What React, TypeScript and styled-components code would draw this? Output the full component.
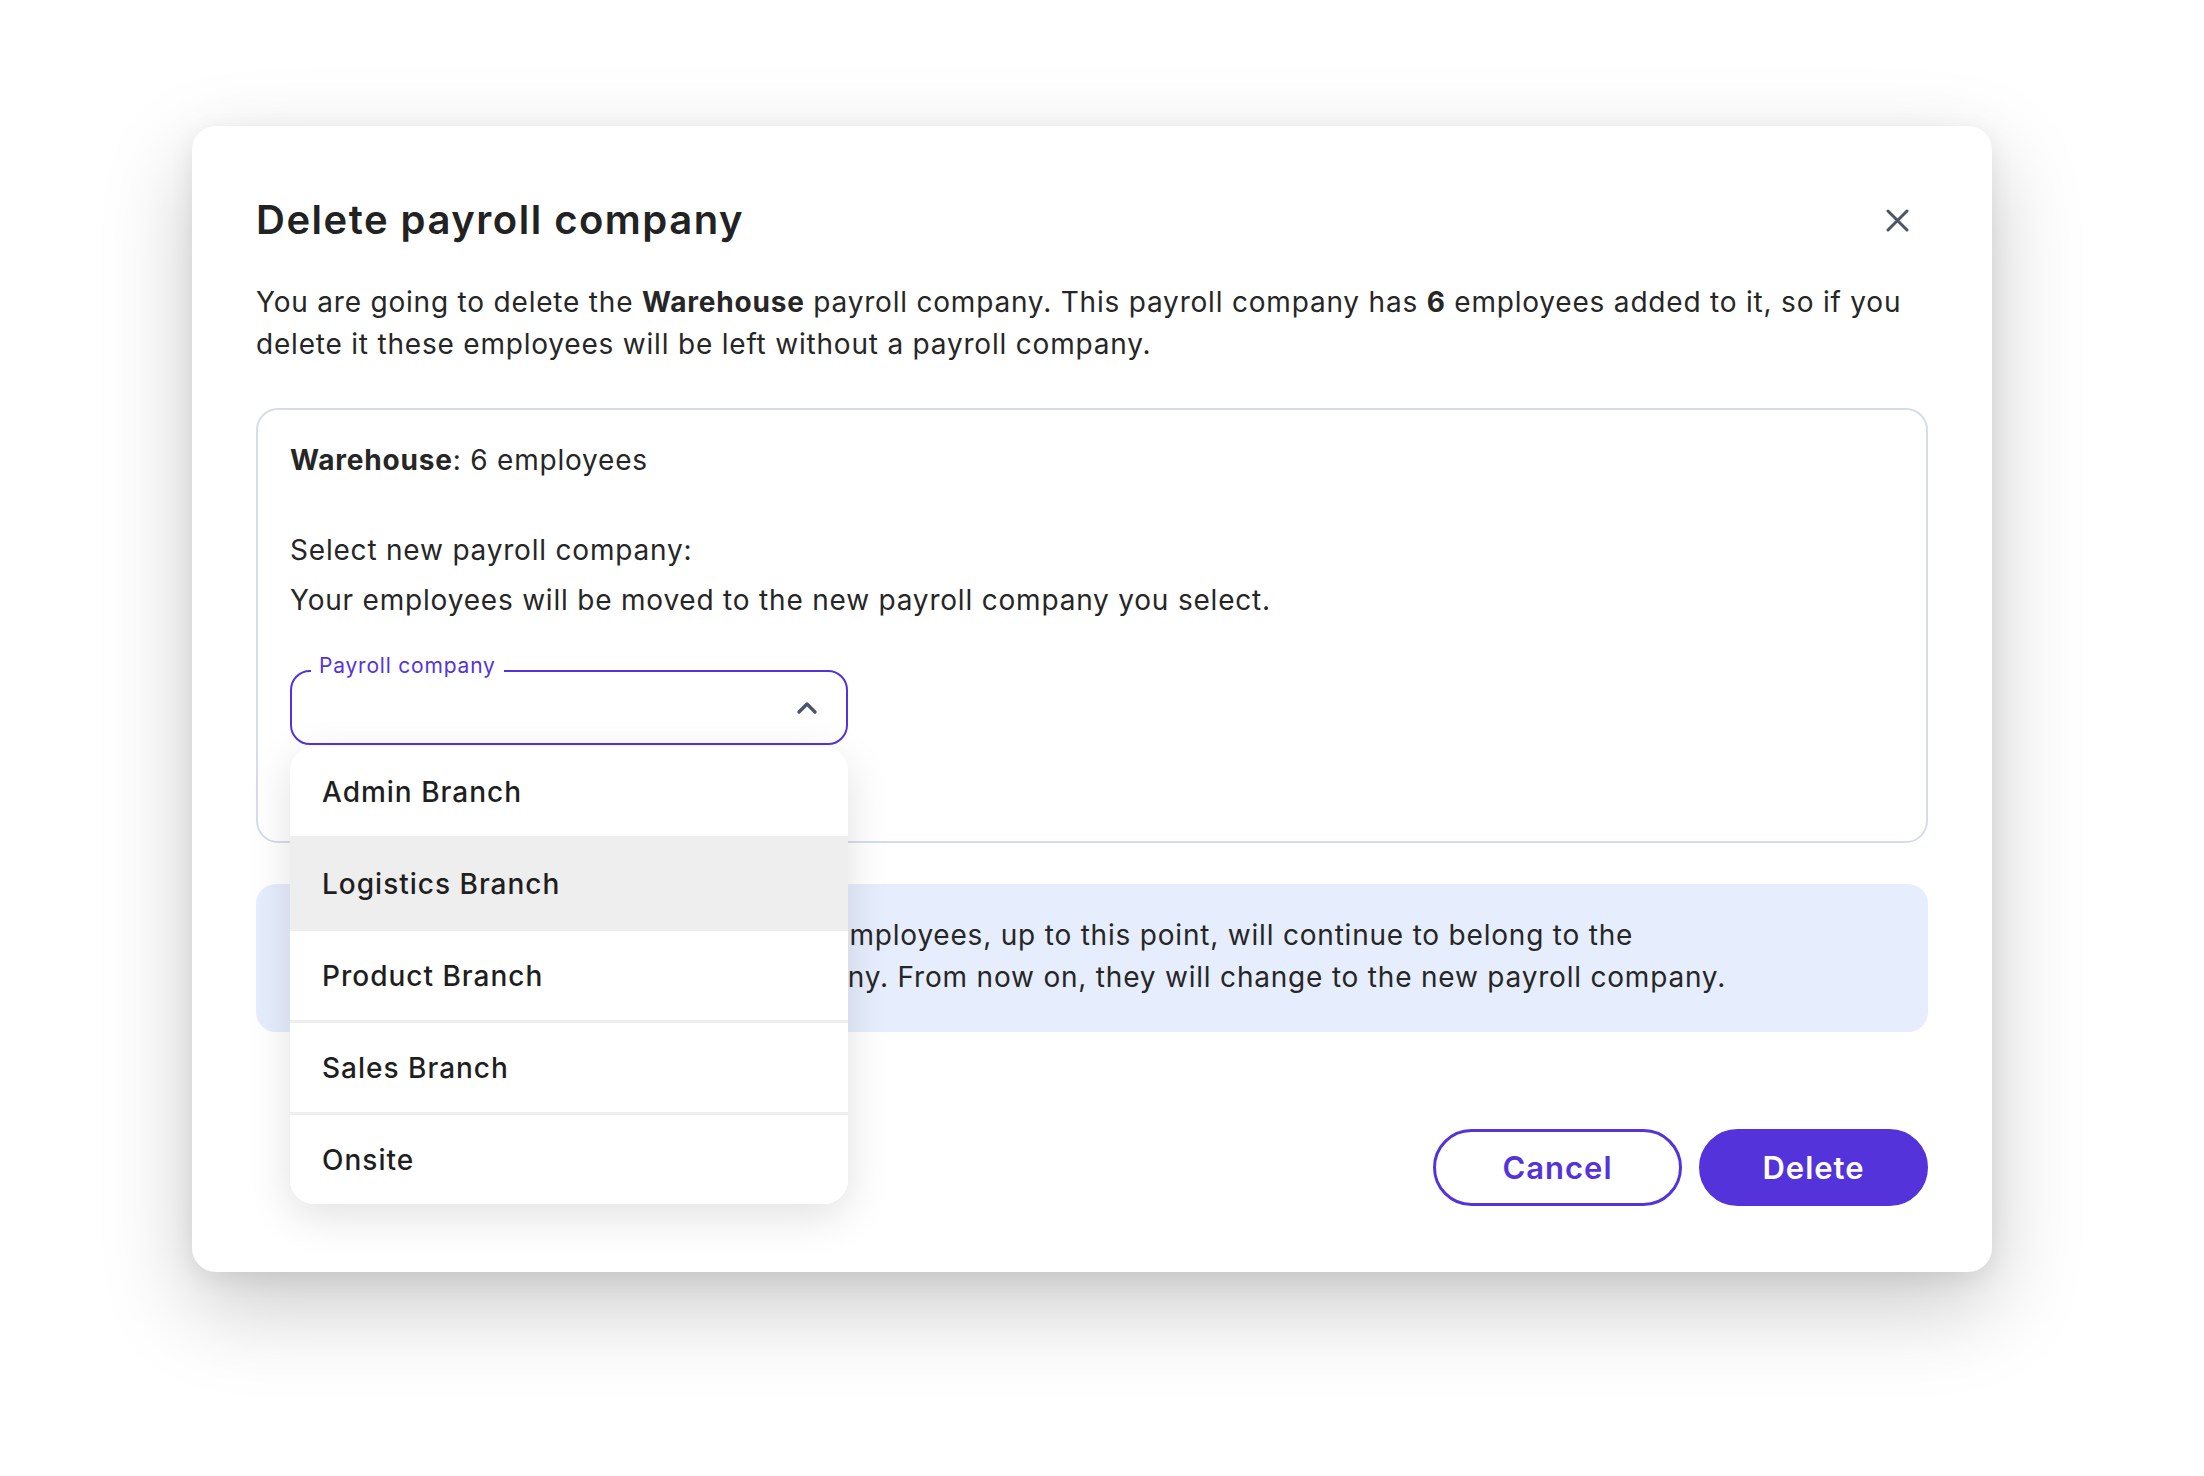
import styled, { createGlobalStyle } from 'styled-components';

const GlobalStyle = createGlobalStyle`
    * {
        box-sizing: border-box;
    }
    body {
        margin: 0;
        background: #ffffff;
        font-family: Inter, "Open Sans", sans-serif;
        color: #232323;
    }
`;

const Page = styled.div`
    width: 2204px;
    height: 1476px;
    padding: 126px 0 0 192px;
    overflow: hidden;
`;

const Modal = styled.div`
    width: 1800px;
    height: 1146px;
    background: #ffffff;
    border-radius: 24px;
    box-shadow: 0 34px 90px rgba(0, 0, 0, 0.21), 0 6px 24px rgba(0, 0, 0, 0.07);
    padding: 64px 64px 66px;
    display: flex;
    flex-direction: column;
`;

const Header = styled.div`
    display: flex;
    align-items: center;
    justify-content: space-between;
    height: 60px;
`;

const Title = styled.h1`
    margin: 0;
    font-size: 40px;
    line-height: 60px;
    font-weight: 600;
    color: #222222;
    letter-spacing: 1.5px;
`;

const CloseButton = styled.button`
    border: none;
    background: none;
    padding: 0;
    margin-right: 19px;
    width: 24px;
    height: 24px;
    display: flex;
    align-items: center;
    justify-content: center;
    color: #4a5568;
    cursor: pointer;
`;

const Text = styled.p<{ $gap?: number }>`
    margin: ${p => p.$gap ?? 0}px 0 0;
    font-size: 28px;
    line-height: 42px;
    letter-spacing: 0.8px;
    color: #262626;
`;

const Panel = styled.div`
    margin-top: 43px;
    border: 2px solid #d5dde8;
    border-radius: 22px;
    padding: 29px 32px 96px;
`;

const Field = styled.div`
    position: relative;
    margin-top: 49px;
    width: 558px;
    height: 75px;
    border: 2px solid #5533db;
    border-radius: 20px;
    display: flex;
    align-items: center;
    justify-content: flex-end;
    padding-right: 28px;
    color: #4a5568;
`;

const FieldLabel = styled.span`
    position: absolute;
    top: -20px;
    left: 19px;
    padding: 0 8px;
    background: #ffffff;
    font-size: 21px;
    line-height: 28px;
    letter-spacing: 0.8px;
    color: #5533db;
`;

const Menu = styled.ul`
    position: absolute;
    top: 75px;
    left: -2px;
    width: 558px;
    margin: 0;
    padding: 0;
    list-style: none;
    background: #ffffff;
    border-radius: 24px;
    overflow: hidden;
    box-shadow: 0 12px 44px rgba(0, 0, 0, 0.12);
    z-index: 2;
`;

const MenuItem = styled.li<{ $active?: boolean }>`
    height: 92px;
    display: flex;
    align-items: center;
    padding-left: 32px;
    font-size: 28px;
    font-weight: 500;
    letter-spacing: 1px;
    color: #1f1f1f;
    background: ${p => (p.$active ? '#eeeeee' : '#ffffff')};
    border-bottom: 3px solid #eeeeee;

    &:last-child {
        height: 89px;
        border-bottom: none;
    }
`;

const InfoBox = styled.div`
    margin-top: 41px;
    background: #e6edfc;
    border-radius: 20px;
    padding: 30px 32px 34px 44px;
    font-size: 28px;
    line-height: 42px;
    letter-spacing: 0.8px;
    color: #262626;
`;

const Actions = styled.div`
    margin-top: auto;
    display: flex;
    justify-content: flex-end;
    gap: 17px;
`;

const Button = styled.button<{ $primary?: boolean }>`
    height: 77px;
    min-width: ${p => (p.$primary ? 229 : 249)}px;
    padding: 0 56px;
    border-radius: 40px;
    border: 3px solid #5533db;
    background: ${p => (p.$primary ? '#5533db' : '#ffffff')};
    color: ${p => (p.$primary ? '#ffffff' : '#5533db')};
    font-family: Inter, "Open Sans", sans-serif;
    font-size: 31px;
    font-weight: 600;
    letter-spacing: 1px;
    cursor: pointer;
`;

const branches = ['Admin Branch', 'Logistics Branch', 'Product Branch', 'Sales Branch', 'Onsite'];

export default function App() {
    return (
        <Page>
            <GlobalStyle />
            <Modal>
                <Header>
                    <Title>Delete payroll company</Title>
                    <CloseButton aria-label="Close">
                        <svg width="23" height="23" viewBox="0 0 23 23" fill="none" stroke="currentColor" strokeWidth="3" strokeLinecap="round">
                            <path d="M2 2 L21 21 M21 2 L2 21" />
                        </svg>
                    </CloseButton>
                </Header>
                <Text $gap={31}>
                    You are going to delete the <b>Warehouse</b> payroll company. This payroll company has <b>6</b> employees added to it, so if you delete it these employees will be left without a payroll company.
                </Text>
                <Panel>
                    <Text>
                        <b>Warehouse</b>: 6 employees
                    </Text>
                    <Text $gap={48}>Select new payroll company:</Text>
                    <Text $gap={8}>Your employees will be moved to the new payroll company you select.</Text>
                    <Field>
                        <FieldLabel>Payroll company</FieldLabel>
                        <svg width="22" height="14" viewBox="0 0 22 14" fill="none" stroke="currentColor" strokeWidth="3.4" strokeLinecap="round" strokeLinejoin="round">
                            <path d="M3 11 L11 3 L19 11" />
                        </svg>
                        <Menu>
                            {branches.map(name => (
                                <MenuItem key={name} $active={name === 'Logistics Branch'}>
                                    {name}
                                </MenuItem>
                            ))}
                        </Menu>
                    </Field>
                </Panel>
                <InfoBox>
                    The payroll data and histories of your employees, up to this point, will continue to belong to the
                    <br />
                    now-deleted Warehouse payroll company. From now on, they will change to the new payroll company.
                </InfoBox>
                <Actions>
                    <Button>Cancel</Button>
                    <Button $primary>Delete</Button>
                </Actions>
            </Modal>
        </Page>
    );
}
